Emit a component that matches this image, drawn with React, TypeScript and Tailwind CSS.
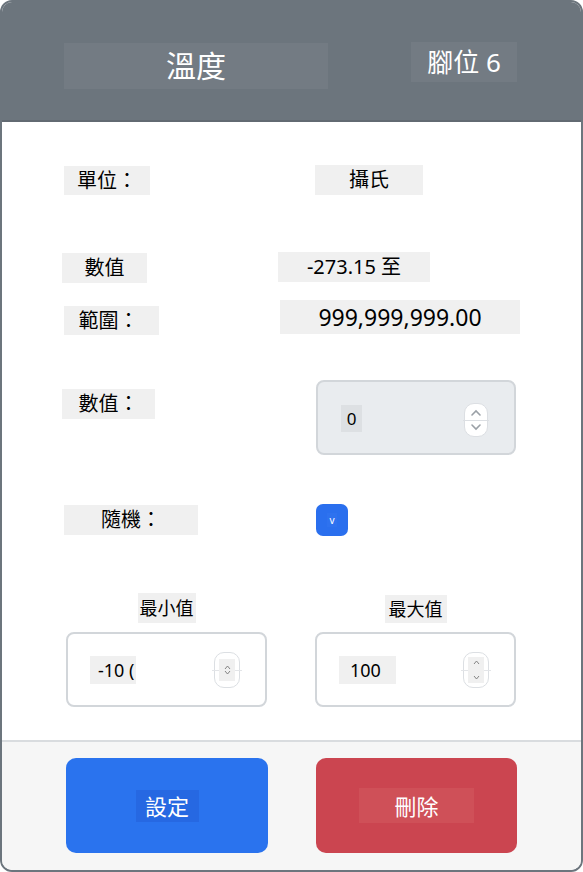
import React from "react";

function Spinner() {
  return (
    <div className="relative flex h-[34px] w-[24px] flex-col items-center justify-center rounded-[10px] border border-[#dcdfe3] bg-white">
      <svg width="12" height="8" viewBox="0 0 12 8" className="mb-[3px]">
        <path d="M2 6 L6 2 L10 6" fill="none" stroke="#9aa0a6" strokeWidth="1.6" strokeLinecap="round" />
      </svg>
      <div className="absolute left-[-2px] right-[-2px] top-1/2 h-px bg-[#dcdfe3]" />
      <svg width="12" height="8" viewBox="0 0 12 8" className="mt-[3px]">
        <path d="M2 2 L6 6 L10 2" fill="none" stroke="#9aa0a6" strokeWidth="1.6" strokeLinecap="round" />
      </svg>
    </div>
  );
}

function SmallSpinner({ tight }: { tight?: boolean }) {
  return (
    <div className="relative flex h-[36px] w-[26px] items-center justify-center rounded-[10px] border border-[#dcdfe3] bg-white">
      <div className="absolute left-[-3px] right-[-3px] top-1/2 h-px bg-[#e3e5e8]" />
      <div
        className={
          tight
            ? "relative flex h-[22px] w-[16px] flex-col items-center justify-center bg-[#f0f0f0]"
            : "relative flex h-[26px] w-[16px] flex-col items-center justify-between bg-[#f0f0f0] py-[3px]"
        }
      >
        <svg width="7" height="5" viewBox="0 0 7 5">
          <path d="M1 4 L3.5 1 L6 4" fill="none" stroke="#777" strokeWidth="0.9" />
        </svg>
        <svg width="7" height="5" viewBox="0 0 7 5">
          <path d="M1 1 L3.5 4 L6 1" fill="none" stroke="#777" strokeWidth="0.9" />
        </svg>
      </div>
    </div>
  );
}

export default function App() {
  return (
    <div className="flex h-[872px] w-[583px] flex-col overflow-hidden rounded-[12px] border-2 border-[#6c757d] bg-white font-['Noto_Sans','Noto_Sans_CJK_TC',sans-serif] text-black">
      {/* header */}
      <div className="flex h-[120px] shrink-0 items-start border-b-2 border-[#626a72] bg-[#6c757d] pl-[62px] pt-[41px]">
        <div className="flex h-[46px] w-[264px] items-center justify-center bg-[#737b83] text-[30px] leading-none text-white">
          溫度
        </div>
        <div className="ml-[83px] mt-[-1px] flex h-[40px] w-[106px] items-center justify-center bg-[#737b83] text-[26px] leading-none text-white">
          腳位 6
        </div>
      </div>

      {/* body */}
      <div className="flex flex-1 flex-col">
        <div className="mt-[43px] flex items-start">
          <div className="ml-[62px] mt-[1px] flex h-[29px] w-[86px] items-center justify-center bg-[#f0f0f0] text-[20px] leading-none">
            單位：
          </div>
          <div className="ml-[165px] flex h-[30px] w-[108px] items-center justify-center bg-[#f0f0f0] text-[20px] leading-none">
            攝氏
          </div>
        </div>

        <div className="mt-[57px] flex items-start">
          <div className="ml-[60px] mt-[1px] flex h-[30px] w-[85px] items-center justify-center bg-[#f0f0f0] text-[20px] leading-none">
            數值
          </div>
          <div className="ml-[131px] flex h-[30px] w-[152px] items-center justify-center bg-[#f0f0f0] text-[20px] leading-none">
            -273.15 至
          </div>
        </div>

        <div className="mt-[17px] flex items-start">
          <div className="ml-[62px] mt-[6px] flex h-[29px] w-[95px] items-center justify-center bg-[#f0f0f0] pr-[6px] text-[20px] leading-none">
            範圍：
          </div>
          <div className="ml-[121px] flex h-[34px] w-[240px] items-center justify-center bg-[#f0f0f0] text-[23px] leading-none">
            999,999,999.00
          </div>
        </div>

        <div className="mt-[45px] flex items-start">
          <div className="ml-[60px] mt-[9px] flex h-[30px] w-[93px] items-center justify-center bg-[#f0f0f0] text-[20px] leading-none">
            數值：
          </div>
          <div className="ml-[161px] flex h-[75px] w-[200px] items-center justify-between rounded-[8px] border-2 border-[#d2d6da] bg-[#e9ecef] pl-[23px] pr-[26px]">
            <div className="mt-[2px] flex h-[27px] w-[21px] items-center justify-center bg-[#dde0e3] text-[17px] leading-none">
              0
            </div>
            <div className="mt-[4px]">
              <Spinner />
            </div>
          </div>
        </div>

        <div className="mt-[49px] flex items-start">
          <div className="ml-[62px] mt-[1px] flex h-[30px] w-[134px] items-center justify-center bg-[#f0f0f0] text-[20px] leading-none">
            隨機：
          </div>
          <div className="ml-[118px] flex h-[32px] w-[32px] items-center justify-center rounded-[7px] bg-[#2a6fee]">
            <span className="flex h-[14px] w-[10px] items-center justify-center bg-[#2e72ef] text-[10px] leading-none text-white">
              v
            </span>
          </div>
        </div>

        <div className="mt-[57px] flex gap-[48px] pl-[64px]">
          <div className="flex w-[201px] flex-col items-center">
            <div className="flex h-[30px] items-center bg-[#f0f0f0] px-[2px] text-[18px] leading-none">
              最小值
            </div>
            <div className="mt-[9px] flex h-[75px] w-full items-center justify-between rounded-[8px] border-2 border-[#d2d6da] bg-white pl-[22px] pr-[25px]">
              <div className="flex h-[28px] w-[46px] items-center overflow-hidden whitespace-nowrap bg-[#f0f0f0] pl-[8px] text-[18px] leading-none">
                -10 (
              </div>
              <SmallSpinner tight />
            </div>
          </div>
          <div className="flex w-[201px] flex-col items-center">
            <div className="mt-[2px] flex h-[28px] items-center bg-[#f0f0f0] px-[4px] text-[18px] leading-none">
              最大值
            </div>
            <div className="mt-[9px] flex h-[75px] w-full items-center justify-between rounded-[8px] border-2 border-[#d2d6da] bg-white pl-[22px] pr-[25px]">
              <div className="flex h-[28px] w-[57px] items-center bg-[#f0f0f0] pl-[11px] text-[18px] leading-none">
                100
              </div>
              <SmallSpinner />
            </div>
          </div>
        </div>
      </div>

      {/* footer */}
      <div className="flex h-[130px] shrink-0 items-start gap-[48px] border-t-2 border-[#d9dcdf] bg-[#f6f6f6] pl-[64px] pt-[16px]">
        <button className="flex h-[95px] w-[202px] items-center justify-center rounded-[10px] bg-[#2a73ee]">
          <span className="flex h-[32px] w-[63px] items-center justify-center bg-[#2668e2] text-[22px] leading-none text-white">
            設定
          </span>
        </button>
        <button className="flex h-[95px] w-[201px] items-center justify-center rounded-[10px] bg-[#cb4550]">
          <span className="flex h-[35px] w-[115px] items-center justify-center bg-[#cf5058] text-[22px] leading-none text-white">
            刪除
          </span>
        </button>
      </div>
    </div>
  );
}
